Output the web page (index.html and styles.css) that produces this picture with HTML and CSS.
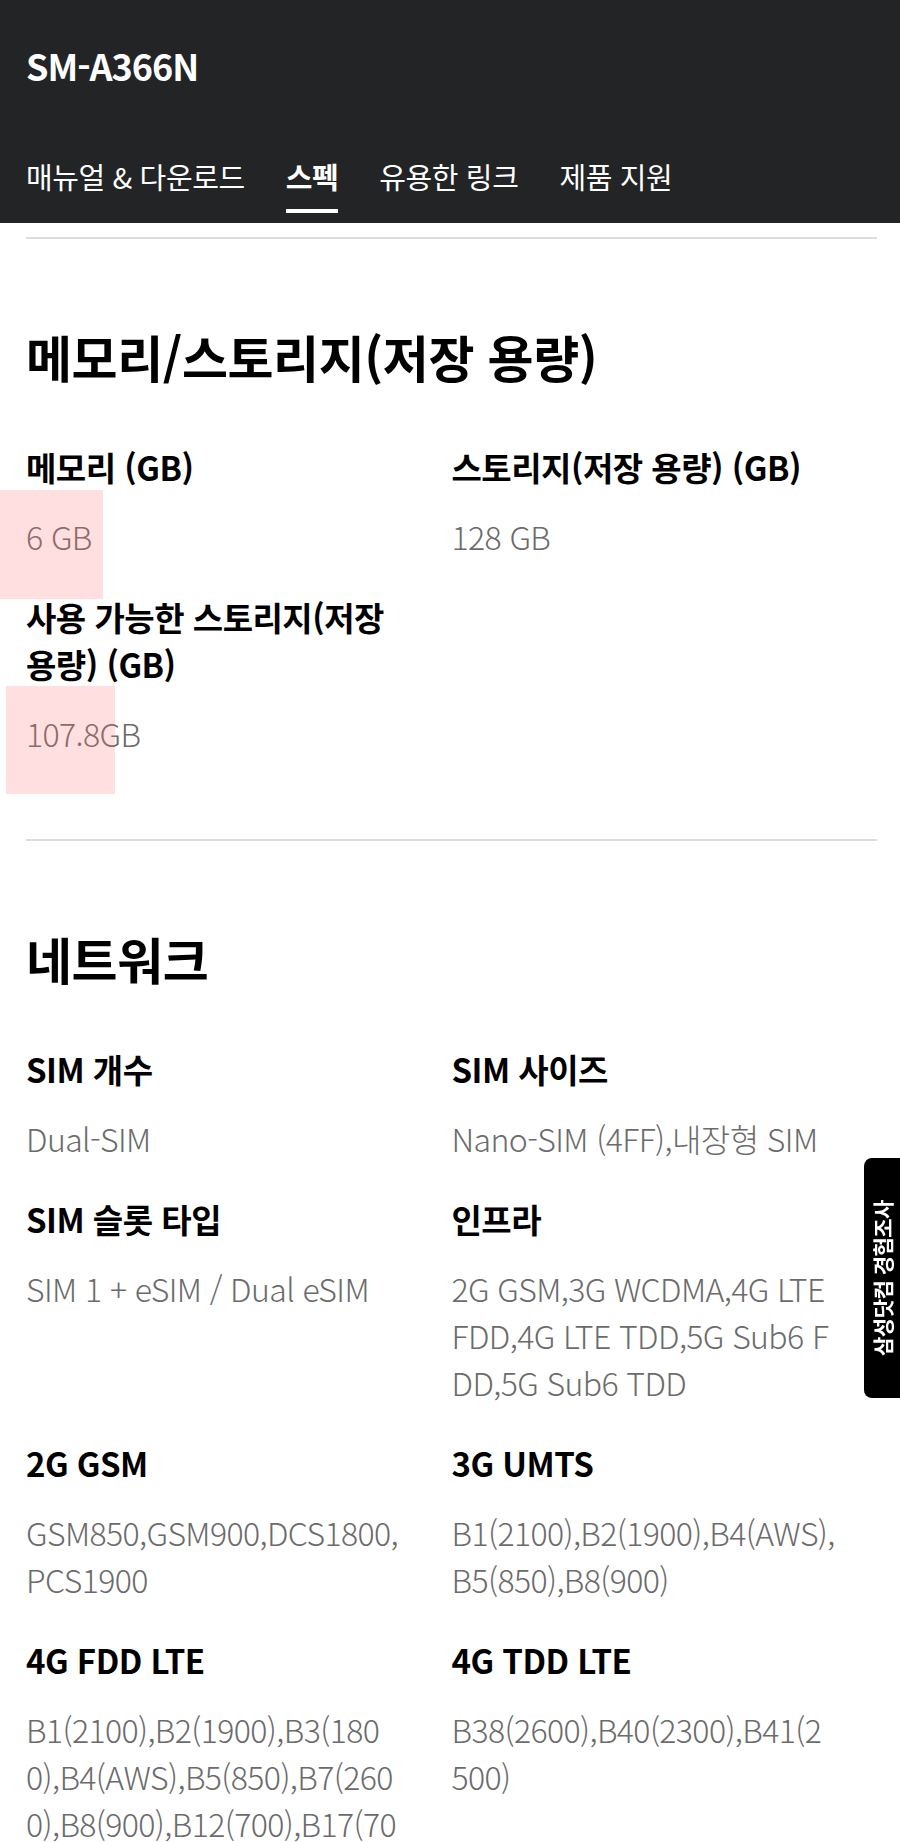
FILE: index.html
```html
<!DOCTYPE html>
<html lang="ko">
<head>
    <meta charset="UTF-8">
    <meta name="viewport" content="width=device-width, initial-scale=1.0">
    <title>SM-A366N 스펙</title>
    <link rel="stylesheet" href="styles.css">
</head>
<body>
    <div class="gnb">
        <div class="gnb-title">SM-A366N</div>
        <div class="tabs">
            <a href="#" class="tab">매뉴얼 &amp; 다운로드</a>
            <a href="#" class="tab active">스펙</a>
            <a href="#" class="tab">유용한 링크</a>
            <a href="#" class="tab">제품 지원</a>
        </div>
    </div>

    <div class="content">
        <div class="section">
            <h2 class="section-title">메모리/스토리지(저장 용량)</h2>
            <div class="spec-grid">
                <div class="spec-item">
                    <div class="spec-label">메모리 (GB)</div>
                    <div class="spec-value mark mark-a">6 GB</div>
                </div>
                <div class="spec-item">
                    <div class="spec-label">스토리지(저장 용량) (GB)</div>
                    <div class="spec-value">128 GB</div>
                </div>
                <div class="spec-item">
                    <div class="spec-label">사용 가능한 스토리지(저장 용량) (GB)</div>
                    <div class="spec-value mark mark-b">107.8GB</div>
                </div>
            </div>
        </div>

        <div class="section">
            <h2 class="section-title">네트워크</h2>
            <div class="spec-grid">
                <div class="spec-item">
                    <div class="spec-label">SIM 개수</div>
                    <div class="spec-value">Dual-SIM</div>
                </div>
                <div class="spec-item">
                    <div class="spec-label">SIM 사이즈</div>
                    <div class="spec-value">Nano-SIM (4FF),내장형 SIM</div>
                </div>
                <div class="spec-item">
                    <div class="spec-label">SIM 슬롯 타입</div>
                    <div class="spec-value">SIM 1 + eSIM / Dual eSIM</div>
                </div>
                <div class="spec-item">
                    <div class="spec-label">인프라</div>
                    <div class="spec-value">2G GSM,3G WCDMA,4G LTE FDD,4G LTE TDD,5G Sub6 FDD,5G Sub6 TDD</div>
                </div>
                <div class="spec-item">
                    <div class="spec-label">2G GSM</div>
                    <div class="spec-value">GSM850,GSM900,DCS1800, PCS1900</div>
                </div>
                <div class="spec-item">
                    <div class="spec-label">3G UMTS</div>
                    <div class="spec-value">B1(2100),B2(1900),B4(AWS), B5(850),B8(900)</div>
                </div>
                <div class="spec-item">
                    <div class="spec-label">4G FDD LTE</div>
                    <div class="spec-value">B1(2100),B2(1900),B3(1800),B4(AWS),B5(850),B7(2600),B8(900),B12(700),B17(700),B20(800),B25(1900),B26(850),B28(700),B66(AWS-3)</div>
                </div>
                <div class="spec-item">
                    <div class="spec-label">4G TDD LTE</div>
                    <div class="spec-value">B38(2600),B40(2300),B41(2500)</div>
                </div>
            </div>
        </div>
    </div>

    <a href="#" class="survey-tab">삼성닷컴 경험조사</a>
</body>
</html>
```

FILE: styles.css
```css
body {
    font-family: "Noto Sans CJK KR", sans-serif;
    margin: 0;
    padding: 0;
    color: #000;
    background: #fff;
}
.gnb {
    background: #222426;
    color: #fff;
    padding: 43px 26px 10px;
}
.gnb-title {
    font-size: 36px;
    font-weight: bold;
    line-height: 44px;
    height: 44px;
    letter-spacing: -1px;
}
.tabs {
    display: flex;
    gap: 41px;
    margin-top: 69px;
}
.tab {
    color: #fff;
    text-decoration: none;
    font-size: 29px;
    line-height: 40px;
    padding-bottom: 13px;
    border-bottom: 4px solid transparent;
    letter-spacing: -0.4px;
}
.tab.active {
    font-weight: bold;
    border-bottom-color: #fff;
}
.content {
    padding: 14px 23px 0 26px;
}
.section {
    border-top: 2px solid #dcdcdc;
    padding: 87px 0 48px;
}
.section-title {
    margin: 0;
    font-size: 50px;
    line-height: 60px;
    font-weight: bold;
    letter-spacing: -0.4px;
}
.spec-grid {
    display: grid;
    grid-template-columns: 1fr 1fr;
    margin-top: 58px;
}
.spec-item {
    padding: 0 39.5px 34px 0;
}
.spec-label {
    font-size: 33px;
    line-height: 47px;
    font-weight: bold;
    word-break: keep-all;
    letter-spacing: -0.5px;
}
.spec-value {
    margin-top: 22px;
    font-size: 32px;
    font-weight: 300;
    line-height: 47px;
    color: #6b6b6b;
    letter-spacing: -0.6px;
    word-break: break-all;
}
.mark {
    position: relative;
}
.mark::after {
    content: "";
    position: absolute;
    background: rgba(255, 110, 110, 0.22);
}
.mark-a::after {
    left: -26px;
    top: -23px;
    width: 103px;
    height: 109px;
}
.mark-b::after {
    left: -20px;
    top: -24px;
    width: 109px;
    height: 108px;
}
.survey-tab {
    position: fixed;
    right: 0;
    top: 1158px;
    width: 36px;
    height: 240px;
    background: #000;
    color: #fff;
    text-decoration: none;
    font-size: 21px;
    font-weight: bold;
    letter-spacing: -0.5px;
    display: flex;
    align-items: center;
    justify-content: center;
    writing-mode: vertical-rl;
    text-orientation: sideways;
    transform: rotate(180deg);
    border-radius: 0 8px 8px 0;
}
```
